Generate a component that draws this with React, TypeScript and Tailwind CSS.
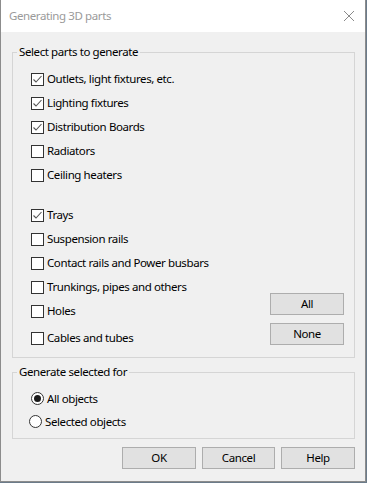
import React from "react";

const font = { fontFamily: '"Noto Sans", "Liberation Sans", sans-serif' };

const topParts = [
  { label: "Outlets, light fixtures, etc.", checked: true },
  { label: "Lighting fixtures", checked: true },
  { label: "Distribution Boards", checked: true },
  { label: "Radiators", checked: false },
  { label: "Ceiling heaters", checked: false },
];

const lowerParts = [
  { label: "Trays", checked: true },
  { label: "Suspension rails", checked: false },
  { label: "Contact rails and Power busbars", checked: false },
  { label: "Trunkings, pipes and others", checked: false },
  { label: "Holes", checked: false },
];

function CheckBox({ checked }: { checked: boolean }) {
  return (
    <span className="w-[13px] h-[13px] border border-[#333333] bg-white flex items-center justify-center shrink-0">
      {checked && (
        <svg width="11" height="11" viewBox="0 0 11 11">
          <path d="M1.5 5.5 L4 8 L9.5 2" fill="none" stroke="#555555" strokeWidth="1.1" />
        </svg>
      )}
    </span>
  );
}

function Row({ label, checked, tall }: { label: string; checked: boolean; tall?: boolean }) {
  return (
    <div className={`flex items-center gap-[3px] ${tall ? "h-[27px] pt-[3px]" : "h-[24px]"}`}>
      <CheckBox checked={checked} />
      <span className="text-[11.5px] tracking-[-0.4px] text-black leading-none">{label}</span>
    </div>
  );
}

function Radio({ label, selected, shift }: { label: string; selected: boolean; shift?: boolean }) {
  return (
    <div className={`flex items-center h-[23px] gap-[3px] ${shift ? "-ml-[2px]" : ""}`}>
      <span className="w-[13px] h-[13px] rounded-full border border-[#333333] bg-white flex items-center justify-center">
        {selected && <span className="w-[7px] h-[7px] rounded-full bg-[#1a1a1a]" />}
      </span>
      <span className="text-[11.5px] tracking-[-0.4px] text-black leading-none">{label}</span>
    </div>
  );
}

function Btn({ children, w }: { children: React.ReactNode; w: string }) {
  return (
    <button className={`${w} h-[22px] bg-[#e1e1e1] border border-[#adadad] text-[11.5px] tracking-[-0.4px] text-black leading-none`}>
      {children}
    </button>
  );
}

export default function App() {
  return (
    <div className="w-[367px] h-[483px] flex bg-[#6b7b8a]" style={font}>
      <div className="w-[366px] h-[482px] flex flex-col bg-[#f0f0f0] border-l border-r border-b border-[#8c8c8c]">
        {/* Title bar */}
        <div className="h-[32px] bg-white flex items-center justify-between pl-[8px] pr-[10px] shrink-0">
          <span className="text-[11.5px] tracking-[-0.4px] text-[#9a9a9a]">Generating 3D parts</span>
          <svg width="12" height="12" viewBox="0 0 12 12">
            <path d="M1 1 L11 11 M11 1 L1 11" stroke="#8a8a8a" strokeWidth="1" />
          </svg>
        </div>

        <div className="flex flex-col pl-[11px] pr-[10px] pt-[11px]">
          {/* Parts group */}
          <fieldset className="border border-[#d5d5d5] pb-[7px] pt-[6px]">
            <legend className="ml-[4px] px-[2px] text-[11.5px] leading-[18px] tracking-[-0.4px] text-black">
              Select parts to generate
            </legend>
            <div className="flex flex-col pl-[18px] pr-[10px]">
              {topParts.map((p) => (
                <Row key={p.label} label={p.label} checked={p.checked} />
              ))}
              <div className="flex items-end mt-[16px]">
                <div className="flex-1 flex flex-col">
                  {lowerParts.map((p) => (
                    <Row key={p.label} label={p.label} checked={p.checked} />
                  ))}
                  <Row label="Cables and tubes" checked={false} tall />
                </div>
                <div className="flex flex-col gap-[8px] mb-[5px]">
                  <Btn w="w-[74px]">All</Btn>
                  <Btn w="w-[74px]">None</Btn>
                </div>
              </div>
            </div>
          </fieldset>

          {/* Scope group */}
          <fieldset className="border border-[#d5d5d5] mt-[5px] pb-[5px] pt-[6px]">
            <legend className="ml-[4px] px-[2px] text-[11.5px] leading-[18px] tracking-[-0.4px] text-black">
              Generate selected for
            </legend>
            <div className="flex flex-col pl-[18px]">
              <Radio label="All objects" selected />
              <Radio label="Selected objects" selected={false} shift />
            </div>
          </fieldset>

          {/* Footer buttons */}
          <div className="flex justify-end gap-[6px] mt-[8px]">
            <Btn w="w-[74px]">OK</Btn>
            <Btn w="w-[73px]">Cancel</Btn>
            <Btn w="w-[74px]">Help</Btn>
          </div>
        </div>
      </div>
    </div>
  );
}
